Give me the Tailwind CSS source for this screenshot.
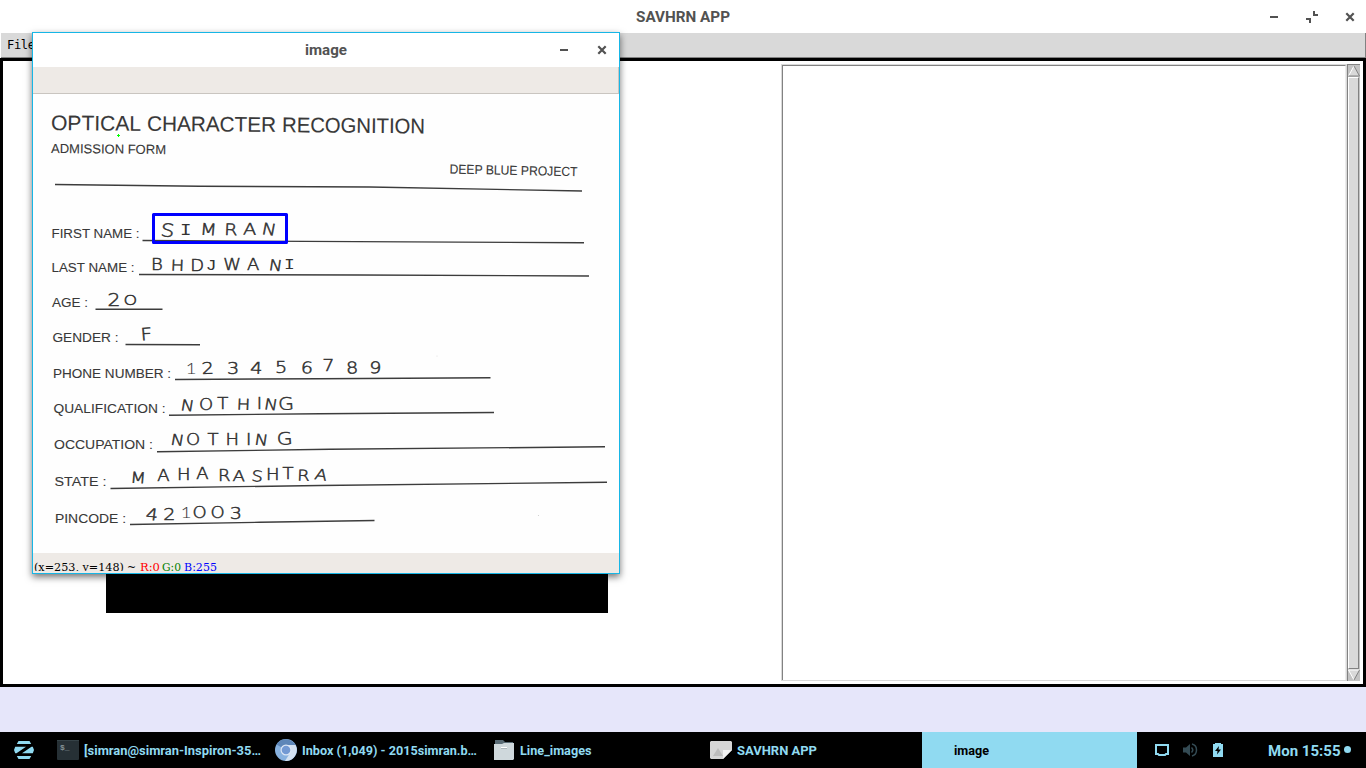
<!DOCTYPE html>
<html lang="en">
<head>
<meta charset="utf-8">
<title>SAVHRN APP</title>
<script src="https://cdn.jsdelivr.net/npm/@tailwindcss/browser@4"></script>
</head>
<body class="overflow-hidden">
<div class="relative flex h-[768px] w-[1366px] flex-col overflow-hidden bg-white font-['Roboto',sans-serif]">
  <!-- Main window title bar -->
  <header class="grid h-[33px] shrink-0 grid-cols-[1fr_auto_1fr] items-center bg-white text-[#525252]">
    <div></div>
    <svg width="94" height="33" class="block"><text x="0" y="22" font-size="15" font-weight="700" fill="#525252" textLength="94" lengthAdjust="spacingAndGlyphs">SAVHRN APP</text></svg>
    <div class="flex items-center justify-end gap-[26px] pr-[10px]">
      <svg width="12" height="12" viewBox="0 0 12 12" class="block"><path d="M2 6h8" stroke="#525252" stroke-width="2"/></svg>
      <svg width="12" height="12" viewBox="0 0 12 12" class="block"><path d="M8 0v4h4M0 8h4v4" fill="none" stroke="#525252" stroke-width="2"/></svg>
      <svg width="12" height="12" viewBox="0 0 12 12" class="block"><path d="M2.300 2.300l7.400 7.400M9.700 2.300l-7.400 7.400" stroke="#525252" stroke-width="2.200"/></svg>
    </div>
  </header>
  <!-- Menu bar -->
  <nav class="ml-px flex h-[25px] shrink-0 items-center border-r border-b border-[#828282] bg-[#d9d9d9] pl-[6px]">
    <svg width="30" height="24" class="block"><text x="0" y="16" font-size="12" fill="#000" font-family="DejaVu Sans Mono, monospace" textLength="28">File</text></svg>
  </nav>
  <!-- Workspace -->
  <main class="flex h-[629px] shrink-0 justify-between border-[3px] border-black bg-white pt-[3px] pr-[3px] pb-[3px] pl-[103px]">
    <div class="flex w-[502px] items-end pb-[68px]"><div class="h-[120px] w-full bg-black"></div></div>
    <div class="flex w-[579px]">
      <div class="flex-1 border border-[#d9d9d9]"><div class="h-full border-t border-l border-[#828282] border-r border-r-[#ececec]"></div></div>
      <div class="flex w-[13px] flex-col border-t border-l border-[#828282] bg-[#c3c3c3]">
        <svg width="12" height="12" viewBox="0 0 12 12" class="block"><path d="M6 1L11.500 11H.5z" fill="#d9d9d9"/><path d="M6 1L.5 11" stroke="#fff"/><path d="M6 1l5.500 10H.5" fill="none" stroke="#828282"/></svg>
        <div class="w-[11px] flex-1 border border-t-white border-r-[#828282] border-b-[#828282] border-l-white bg-[#d9d9d9]"></div>
        <svg width="12" height="12" viewBox="0 0 12 12" class="block"><path d="M.5 1h11L6 11z" fill="#d9d9d9"/><path d="M11.500 1H.5L6 11" fill="none" stroke="#fff"/><path d="M6 11l5.500-10" stroke="#828282"/></svg>
      </div>
    </div>
  </main>
  <div class="h-[45px] shrink-0 bg-[#e6e6fa]"></div>
  <!-- Taskbar -->
  <footer class="flex h-[36px] shrink-0 items-center bg-black text-[13px] font-bold text-[#90daf1]">
    <div class="flex w-[57px] shrink-0 pl-[14px]">
      <svg width="20" height="18" viewBox="0 0 20 18" class="block"><g fill="#90daf1"><path d="M4.500 0h11l1.700 3H2.800zM2.800 15h14.400l-1.700 3h-11z"/><path d="M1.200 5.700H12L2.500 12.300H1.200L0 9zM18.800 5.700L20 9l-1.200 3.300H8l9.500-6.600z"/></g></svg>
    </div>
    <div class="flex w-[218px] shrink-0 items-center gap-[5px]">
      <svg width="22" height="20" viewBox="0 0 22 20" class="block"><rect width="22" height="20" rx="1" fill="#263035"/><path d="M0 .5h22" stroke="#354247"/><text x="3" y="10" font-size="8" fill="#849096" font-family="Liberation Mono, monospace">$_</text></svg>
      <svg width="180" height="36" class="block overflow-visible"><text x="0" y="23" fill="#90daf1" textLength="177" lengthAdjust="spacingAndGlyphs">[simran@simran-Inspiron-35…</text></svg>
    </div>
    <div class="flex w-[219px] shrink-0 items-center gap-[5px]">
      <svg width="22" height="22" viewBox="0 0 22 22" class="block"><circle cx="11" cy="11" r="11" fill="#87b1df"/><path d="M11 11L1.500 5.500A11 11 0 0 1 20.500 6H11z" fill="#5d86b8"/><path d="M11 6h9.500A11 11 0 0 1 10 22l5-8z" fill="#d3e1f1"/><circle cx="11" cy="11" r="5.500" fill="#dce7f5"/><circle cx="11" cy="11" r="4.300" fill="#7299d3"/></svg>
      <svg width="180" height="36" class="block overflow-visible"><text x="0" y="23" fill="#90daf1" textLength="175" lengthAdjust="spacingAndGlyphs">Inbox (1,049) - 2015simran.b…</text></svg>
    </div>
    <div class="flex w-[216px] shrink-0 items-center gap-[6px]">
      <svg width="20" height="20" viewBox="0 0 20 20" class="block"><path d="M1 0h8l2 2h8v5H1z" fill="#596b75"/><path d="M0 4h8l2-1h10v16l-1 1H0z" fill="#cfd8dc"/><path d="M7 7.500h6" stroke="#fff"/><path d="M7 8.500h6" stroke="#9ca6aa" stroke-width=".7"/></svg>
      <svg width="74" height="36" class="block"><text x="0" y="23" fill="#90daf1" textLength="71.500" lengthAdjust="spacingAndGlyphs">Line_images</text></svg>
    </div>
    <div class="flex w-[212px] shrink-0 items-center gap-[5px]">
      <svg width="22" height="18" viewBox="0 0 22 18" class="block"><path d="M1 0h20l1 1v8l-9 9H1l-1-1V1z" fill="#d6d6d6"/><path d="M3 15l5-8 5 8z" fill="#bcbcbc"/><path d="M13 9h9l-9 9z" fill="#f3f3f3"/></svg>
      <svg width="82" height="36" class="block"><text x="0" y="23" fill="#90daf1" textLength="80" lengthAdjust="spacingAndGlyphs">SAVHRN APP</text></svg>
    </div>
    <div class="flex h-full w-[215px] shrink-0 items-center bg-[#90daf1] pl-[32px]">
      <svg width="37" height="36" class="block"><text x="0" y="23" fill="#000" font-weight="700" textLength="35" lengthAdjust="spacingAndGlyphs">image</text></svg>
    </div>
    <div class="flex shrink-0 items-center pl-[18px]">
      <svg width="14" height="12" viewBox="0 0 14 12" class="block"><path d="M1 1h12v9h-2l-1 1H4l-1-1H1z" fill="none" stroke="#90daf1" stroke-width="2"/></svg>
      <svg width="15" height="14" viewBox="0 0 15 14" class="ml-[14px] block"><path d="M0 4.500h3L7 1v12L3 9.500H0z" fill="#344b54"/><path d="M8.500 4.500q2.500 2.500 0 5M9 1c6 1.500 6 10.500 0 12" fill="none" stroke="#344b54" stroke-width="1.500"/></svg>
      <svg width="10" height="14" viewBox="0 0 10 14" class="ml-[15px] block"><path d="M2 0h6v1h2v13H0V1h2z" fill="#90daf1"/><path d="M6 3L2 8h2.500L4 11.500 8 6.500H5.500z" fill="#000"/></svg>
      <svg width="84" height="36" class="ml-[45px] block"><text x="0" y="24" font-size="15" fill="#90daf1" textLength="72.500" lengthAdjust="spacingAndGlyphs">Mon 15:55</text><circle cx="79.500" cy="17.500" r="3.500" fill="#90daf1"/></svg>
    </div>
  </footer>

  <!-- Floating image viewer window -->
  <section class="absolute top-[32px] left-[32px] flex h-[542px] w-[588px] flex-col border border-[#17b6e6] bg-white shadow-[0_3px_7px_rgba(0,0,0,0.55)]">
    <div class="grid h-[34px] shrink-0 grid-cols-[1fr_auto_1fr] items-center">
      <div></div>
      <svg width="43" height="34" class="block"><text x="0" y="22" font-size="15" font-weight="700" fill="#525252" textLength="42" lengthAdjust="spacingAndGlyphs">image</text></svg>
      <div class="flex items-center justify-end gap-[26px] pr-[11px]">
        <svg width="12" height="12" viewBox="0 0 12 12" class="block"><path d="M2 6h8" stroke="#525252" stroke-width="2"/></svg>
        <svg width="12" height="12" viewBox="0 0 12 12" class="block"><path d="M2.300 2.300l7.400 7.400M9.700 2.300l-7.400 7.400" stroke="#525252" stroke-width="2.200"/></svg>
      </div>
    </div>
    <div class="h-[27px] shrink-0 border-r border-b border-[#c9c5c0] bg-[#eeeae6]"></div>
    <!-- Scanned form -->
    <svg width="586" height="459" viewBox="33 94 586 459" class="block shrink-0 bg-[#fefefe]" font-family="Liberation Sans, Arial, sans-serif">
      <g fill="#383838" stroke="#383838" stroke-width=".1" font-size="13.500">
        <text x="51" y="130" font-size="21" textLength="90" lengthAdjust="spacingAndGlyphs" transform="rotate(.5 51 130)">OPTICAL</text>
        <text x="147" y="130.800" font-size="21" textLength="129" lengthAdjust="spacingAndGlyphs" transform="rotate(.5 147 130.800)">CHARACTER</text>
        <text x="282" y="132" font-size="21" textLength="143" lengthAdjust="spacingAndGlyphs" transform="rotate(.6 282 132)">RECOGNITION</text>
        <text x="51" y="153" font-size="13" textLength="115" lengthAdjust="spacingAndGlyphs" transform="rotate(.5 51 153)">ADMISSION FORM</text>
        <text x="449.500" y="173.500" font-size="13" textLength="128" lengthAdjust="spacingAndGlyphs" transform="rotate(1.200 449.500 173.500)">DEEP BLUE PROJECT</text>
        <text x="51.500" y="237.700" textLength="88" lengthAdjust="spacingAndGlyphs">FIRST NAME :</text>
        <text x="51.500" y="272" textLength="83" lengthAdjust="spacingAndGlyphs">LAST NAME :</text>
        <text x="52" y="306.500" textLength="36" lengthAdjust="spacingAndGlyphs">AGE :</text>
        <text x="52.500" y="342" textLength="66" lengthAdjust="spacingAndGlyphs">GENDER :</text>
        <text x="53" y="377.700" textLength="118" lengthAdjust="spacingAndGlyphs">PHONE NUMBER :</text>
        <text x="53.500" y="413.300" textLength="112" lengthAdjust="spacingAndGlyphs">QUALIFICATION :</text>
        <text x="54" y="449.300" textLength="99" lengthAdjust="spacingAndGlyphs">OCCUPATION :</text>
        <text x="54.500" y="486" textLength="52" lengthAdjust="spacingAndGlyphs">STATE :</text>
        <text x="55" y="522.800" textLength="71" lengthAdjust="spacingAndGlyphs">PINCODE :</text>
      </g>
      <g fill="none" stroke="#3c3c3c" stroke-width="1.400">
        <path d="M55 184.500L200 186.300 370 187 582 191"/>
        <path d="M142.500 240.500L584 242.800"/>
        <path d="M139 274.500L360 275 589 276"/>
        <path d="M95.500 309.200H162.500"/>
        <path d="M125.500 344.500L200 344.800"/>
        <path d="M175 379.500L320 378.700 490.500 377.800"/>
        <path d="M169 415.300L320 413.700 494 412.500"/>
        <path d="M157 451.700L330 449.300 605 446.800"/>
        <path d="M110.500 488.500L320 485.500 607 482.300"/>
        <path d="M130 524.500L260 522.300 374.500 520.500"/>
      </g>
      <!-- Handwritten answers, widened horizontally -->
      <g transform="scale(1.200 1)" fill="#333" stroke="#333" stroke-width=".5" font-family="DejaVu Sans, sans-serif" font-size="16" font-weight="200">
        <text x="133.300 150 166.500 186.700 202.500 217.500" y="236 235 234.500 235 234.500 234" rotate="6 0 4 2 2 9"><tspan font-size="18">S</tspan><tspan font-family="Liberation Mono" stroke="none">I</tspan><tspan>MRAN</tspan></text>
        <text x="125.800 142 158.500 171.500 186 205.800 223.500 236.700" y="270.500 270.500 271 270 270 270 270 269.500" rotate="0 2 0 0 0 0 7 0" font-size="15"><tspan>BHD</tspan><tspan font-family="Liberation Mono" stroke="none">J</tspan><tspan>WAN</tspan><tspan font-family="Liberation Mono" stroke="none">I</tspan></text>
        <text x="89.500 103" y="306 305.500" font-size="17">2<tspan font-size="14.500">O</tspan></text>
        <text x="117.500" y="340.500" rotate="-4" font-size="17">F</text>
        <text x="154.500 168.300 189.200 208.300 229.200 250.500 268.500 288.500 307.500" y="374.500 374 374 373.500 373.500 373 371.500 373.500 373" rotate="0 -3 0 2 0 3 0 -2 2"><tspan font-family="Lato" font-weight="300" stroke="none">1</tspan>23456789</text>
        <text x="150 165.800 181 197 214 219.500 232" y="410 410 409.500 409.500 409 409 410" rotate="8 0 0 2 0 8 -3" font-size="15">NOTHIN<tspan font-size="17">G</tspan></text>
        <text x="141.700 155 173 188 205 211.700 231" y="444.500 445.500 445 445 445 444.500 445" rotate="8 0 0 0 0 7 -4" font-size="15">NOTHIN<tspan font-size="17">G</tspan></text>
        <text x="108.300 131 147.500 163.500 181.700 193.800 209.200 221.700 235.500 247.500 261.700" y="482.500 481.500 480.500 479.500 481 481 481 480 479 480.500 479" rotate="4 0 0 0 0 2 5 0 0 2 10" font-size="15">MAHARASHTRA</text>
        <text x="121 136 150.500 160.500 175.500 191.500" y="519.500 520 518.500 518.500 518.500 519" rotate="6 0 0 0 0 0" font-size="16">42<tspan font-family="Lato" font-weight="300" stroke="none">1</tspan><tspan font-size="15">OO</tspan>3</text>
      </g>
      <rect x="153.500" y="214.500" width="133" height="28" fill="none" stroke="#0000fe" stroke-width="3" stroke-linejoin="round"/>
      <path d="M117 135.500h3M118.500 134v3" stroke="#00ff00"/>
      <circle cx="538.500" cy="515.500" r=".6" fill="#ccc"/><circle cx="437" cy="356" r=".6" fill="#ddd"/>
    </svg>
    <div class="flex flex-1 items-end bg-[#eeeae6]">
      <svg width="190" height="18" viewBox="33 554 190 18" class="mb-[2px] block overflow-hidden" font-family="DejaVu Serif, serif" font-size="11.500">
        <text x="34" y="571.500" fill="#000" textLength="90" lengthAdjust="spacingAndGlyphs">(x=253, y=148)</text>
        <text x="127" y="571.500" fill="#000" textLength="9" lengthAdjust="spacingAndGlyphs">~</text>
        <text x="140" y="571.500" fill="#f00" textLength="20" lengthAdjust="spacingAndGlyphs">R:0</text>
        <text x="162" y="571.500" fill="#008000" textLength="19" lengthAdjust="spacingAndGlyphs">G:0</text>
        <text x="184" y="571.500" fill="#00f" textLength="33" lengthAdjust="spacingAndGlyphs">B:255</text>
      </svg>
    </div>
  </section>
</div>
</body>
</html>
